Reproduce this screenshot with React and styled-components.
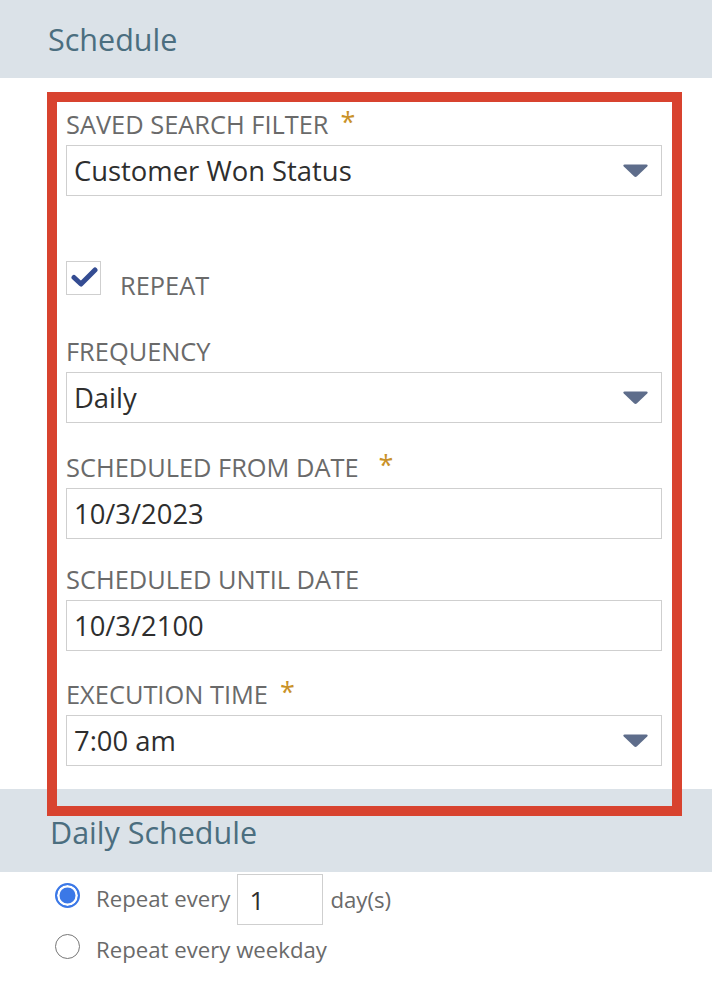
import React from "react";
import styled, { createGlobalStyle } from "styled-components";

const Global = createGlobalStyle`
  html, body { margin: 0; padding: 0; background: #ffffff; }
  body { font-family: "Open Sans", "Liberation Sans", sans-serif; }
  * { box-sizing: border-box; }
`;

const Page = styled.div`
  position: relative;
  width: 712px;
  min-height: 990px;
  background: #fff;
`;

const SectionBar = styled.div`
  height: ${(p) => p.$h}px;
  background: #dbe2e8;
  display: flex;
  align-items: center;
  padding-left: ${(p) => p.$pl}px;
  padding-top: ${(p) => p.$pt || 0}px;
`;

const SectionTitle = styled.h2`
  margin: 0;
  font-size: 30.5px;
  font-weight: 400;
  color: #4b6e7f;
  line-height: 1;
`;

const FormBody = styled.div`
  padding: 31px 50px 23px 66px;
  display: flex;
  flex-direction: column;
`;

const Field = styled.div`
  display: flex;
  flex-direction: column;
  margin-top: ${(p) => p.$mt || 0}px;
`;

const Label = styled.div`
  font-size: 25.4px;
  line-height: 30px;
  color: #6a6a6a;
  text-transform: uppercase;
  display: flex;
  align-items: flex-start;
  white-space: nowrap;
`;

const Required = styled.span`
  color: #c99128;
  font-size: 27px;
  line-height: 30px;
  margin-left: ${(p) => p.$gap}px;
  margin-top: -2px;
`;

const Box = styled.div`
  margin-top: 6px;
  height: 51px;
  border: 1px solid #cfcfcf;
  background: #fff;
  display: flex;
  align-items: center;
  justify-content: space-between;
  padding: 0 12px 0 7px;
`;

const Value = styled.span`
  font-size: 27.4px;
  color: #2e2e2e;
  line-height: 1;
`;

const Arrow = styled.svg`
  width: 27px;
  height: 15px;
  flex: none;
`;

const CheckRow = styled.div`
  margin-top: 65px;
  display: flex;
  align-items: flex-start;
  gap: 19px;
`;

const CheckBox = styled.div`
  width: 35px;
  height: 34px;
  border: 1px solid #cfcfcf;
  background: #fff;
  display: flex;
  align-items: flex-start;
  justify-content: flex-start;
  padding: 3px 0 0 3px;
`;

const CheckLabel = styled.span`
  margin-top: 9px;
  font-size: 25.4px;
  line-height: 30px;
  color: #6a6a6a;
`;

const RadioList = styled.div`
  padding: 2px 0 0 55px;
  display: flex;
  flex-direction: column;
`;

const RadioRow = styled.div`
  display: flex;
  align-items: center;
  height: ${(p) => p.$h}px;
`;

const Radio = styled.span`
  width: 25px;
  height: 25px;
  border-radius: 50%;
  flex: none;
  margin-bottom: 8px;
  border: ${(p) => (p.$on ? "2px solid #3b78e7" : "1.5px solid #777")};
  background: ${(p) => (p.$on ? "#3b78e7" : "#fff")};
  box-shadow: ${(p) => (p.$on ? "inset 0 0 0 2.5px #fff" : "none")};
`;

const RadioLabel = styled.span`
  margin-left: 16px;
  font-size: 22.2px;
  color: #6a6a6a;
  line-height: 1;
`;

const SmallInput = styled.div`
  margin-left: 7px;
  width: 86px;
  height: 51px;
  border: 1px solid #cfcfcf;
  display: flex;
  align-items: center;
  padding-left: 11px;
  font-size: 26px;
  color: #2e2e2e;
`;

const Suffix = styled.span`
  margin-left: 7px;
  font-size: 22.2px;
  color: #6a6a6a;
`;

const Highlight = styled.div`
  position: absolute;
  left: 47px;
  top: 92px;
  width: 635px;
  height: 724px;
  border: 10px solid #d8432f;
  pointer-events: none;
`;

const DropArrow = () => (
  <Arrow viewBox="0 0 27 15">
    <path
      d="M2.5 1.5 H24.5 Q26.5 1.5 25.2 3.4 L15 13.2 Q13.5 14.6 12 13.2 L1.8 3.4 Q0.5 1.5 2.5 1.5 Z"
      fill="#5e6d8b"
    />
  </Arrow>
);

const fields = [
  { label: "Frequency", value: "Daily", select: true, mt: 36 },
  { label: "Scheduled from date", value: "10/3/2023", req: 20, mt: 29 },
  { label: "Scheduled until date", value: "10/3/2100", mt: 25 },
  { label: "Execution time", value: "7:00 am", select: true, req: 12, mt: 28 },
];

export default function App() {
  return (
    <Page>
      <Global />
      <SectionBar $h={78} $pl={48}>
        <SectionTitle>Schedule</SectionTitle>
      </SectionBar>
      <FormBody>
        <Field>
          <Label>
            Saved search filter<Required $gap={12}>*</Required>
          </Label>
          <Box>
            <Value>Customer Won Status</Value>
            <DropArrow />
          </Box>
        </Field>
        <CheckRow>
          <CheckBox>
            <svg width="28" height="24" viewBox="0 0 28 24">
              <path
                d="M4 12.5 L11 19 L25 5"
                fill="none"
                stroke="#344c92"
                strokeWidth="5"
                strokeLinecap="round"
                strokeLinejoin="round"
              />
            </svg>
          </CheckBox>
          <CheckLabel>REPEAT</CheckLabel>
        </CheckRow>
        {fields.map((f) => (
          <Field key={f.label} $mt={f.mt}>
            <Label>
              {f.label}
              {f.req ? <Required $gap={f.req}>*</Required> : null}
            </Label>
            <Box>
              <Value>{f.value}</Value>
              {f.select ? <DropArrow /> : null}
            </Box>
          </Field>
        ))}
      </FormBody>
      <SectionBar $h={83} $pl={50} $pt={4}>
        <SectionTitle>Daily Schedule</SectionTitle>
      </SectionBar>
      <RadioList>
        <RadioRow $h={51}>
          <Radio $on />
          <RadioLabel>Repeat every</RadioLabel>
          <SmallInput>1</SmallInput>
          <Suffix>day(s)</Suffix>
        </RadioRow>
        <RadioRow $h={50}>
          <Radio />
          <RadioLabel>Repeat every weekday</RadioLabel>
        </RadioRow>
      </RadioList>
      <Highlight />
    </Page>
  );
}
